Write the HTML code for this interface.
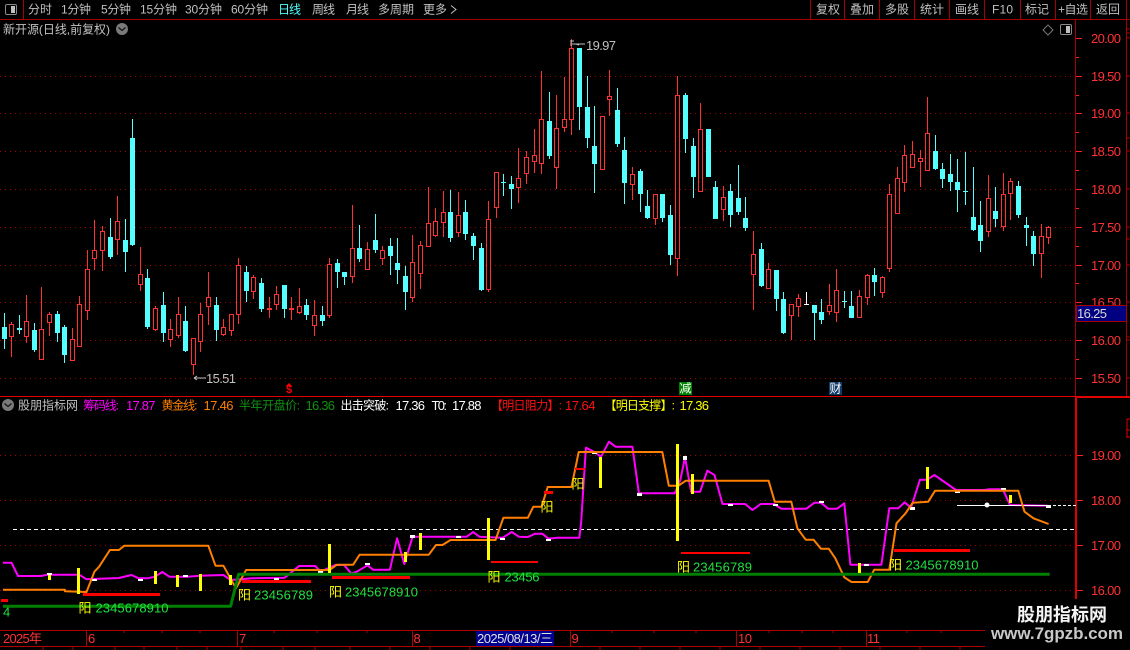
<!DOCTYPE html>
<html><head><meta charset="utf-8"><style>
html,body{margin:0;padding:0;background:#000;width:1130px;height:650px;overflow:hidden}
svg{display:block}
text{font-family:"Liberation Sans","WenQuanYi Zen Hei","Noto Sans CJK SC",sans-serif;font-size:12px;dominant-baseline:central}
.t{fill:#c0c0c0}
.n{font-size:13px}
.ax{fill:#ff3232;font-size:13px}
.g{fill:#20e040;font-size:13px}
.y{fill:#ffff00;font-size:13px}
</style></head><body>
<svg width="1130" height="650" viewBox="0 0 1130 650" xmlns="http://www.w3.org/2000/svg">
<rect width="1130" height="650" fill="#000"/>
<g shape-rendering="crispEdges">
<path d="M0 19.5H1130M23.5 0V19M810.5 0V19M844.5 0V19M879.5 0V19M914.5 0V19M949.5 0V19M984.5 0V19M1020.5 0V19M1055.5 0V19M1090.5 0V19M1126.5 0V19" stroke="#a80000" fill="none"/>
<path d="M0 76.5H1076M0 113.5H1076M0 151.5H1076M0 189.5H1076M0 227.5H1076M0 265.5H1076M0 302.5H1076M0 340.5H1076M0 378.5H1076M0 455.5H1076M0 500.5H1076M0 545.5H1076M0 590.5H1076" stroke="#a00000" stroke-dasharray="1 4" fill="none"/>
<path d="M1075.5 20V396M1126.5 20V396" stroke="#a80000" fill="none"/>
<path d="M1076 38.5h6M1076 76.5h6M1076 113.5h6M1076 151.5h6M1076 189.5h6M1076 227.5h6M1076 265.5h6M1076 302.5h6M1076 340.5h6M1076 378.5h6M1076 57.5h3M1076 95.5h3M1076 132.5h3M1076 170.5h3M1076 208.5h3M1076 246.5h3M1076 283.5h3M1076 321.5h3M1076 359.5h3" stroke="#ff2020" fill="none"/>
<path d="M1127 29h3M1127 33h3M1127 38h3M1127 76h3M1127 113h3M1127 138h3M1127 151h3M1127 189h3M1127 227h3M1127 239h3M1127 265h3M1127 302h3M1127 337h3M1127 340h3M1127 378h3" stroke="#a80000" fill="none"/>
<!-- teal wicks -->
<path fill="none" stroke="#54ffff" d="M4.5 313V349M19.5 315V334M34.5 323V352M57.5 311V342M64.5 325V363M110.5 218V259M125.5 219V272M132.5 119V246M147.5 269V329M163.5 292V342M185.5 306V352M216.5 297V341M246.5 266V302M261.5 278V312M284.5 285V318M306.5 299V320M322.5 306V326M337.5 259V288M344.5 272V285M359.5 225V262M375.5 214V253M390.5 238V275M397.5 238V284M405.5 266V310M450.5 190V242M465.5 200V240M473.5 233V260M481.5 243V291M503.5 174V196M511.5 176V209M549.5 92V159M579.5 48V130M587.5 76V148M594.5 106V193M617.5 88V147M624.5 137V204M640.5 169V212M647.5 190V219M662.5 194V222M670.5 205V265M685.5 93V153M693.5 138V198M708.5 129V177M715.5 181V219M730.5 184V227M738.5 165V215M745.5 197V231M761.5 243V287M776.5 270V311M783.5 292V334M814.5 305V340M821.5 299V324M844.5 291V308M851.5 291V318M874.5 268V296M935.5 135V170M942.5 163V188M950.5 154V191M957.5 159V212M965.5 152V205M973.5 167V231M980.5 201V252M995.5 187V227M1018.5 181V218M1026.5 217V246M1033.5 231V266"/>
<!-- teal bodies -->
<path fill="#54ffff" d="M2 327h5v12h-5zM17 328h5v2h-5zM32 330h5v20h-5zM55 314h5v19h-5zM62 327h5v28h-5zM108 237h5v20h-5zM123 240h5v12h-5zM130 138h5v107h-5zM145 278h5v49h-5zM161 305h5v28h-5zM183 321h5v30h-5zM214 305h5v25h-5zM244 272h5v19h-5zM259 283h5v26h-5zM282 285h5v24h-5zM304 305h5v10h-5zM320 315h5v6h-5zM335 263h5v9h-5zM342 272h5v5h-5zM357 248h5v11h-5zM373 240h5v10h-5zM388 246h5v10h-5zM395 263h5v7h-5zM403 276h5v16h-5zM448 212h5v26h-5zM463 212h5v22h-5zM471 236h5v10h-5zM479 248h5v42h-5zM501 182h5v1h-5zM509 184h5v5h-5zM547 121h5v35h-5zM577 48h5v59h-5zM585 107h5v31h-5zM592 146h5v18h-5zM615 110h5v34h-5zM622 150h5v33h-5zM638 171h5v23h-5zM645 206h5v12h-5zM660 194h5v24h-5zM668 215h5v40h-5zM683 95h5v44h-5zM691 146h5v31h-5zM706 129h5v48h-5zM713 187h5v32h-5zM728 191h5v24h-5zM736 198h5v14h-5zM743 218h5v10h-5zM759 249h5v37h-5zM774 270h5v29h-5zM781 299h5v34h-5zM812 305h5v8h-5zM819 312h5v8h-5zM842 301h5v1h-5zM849 306h5v12h-5zM872 275h5v7h-5zM933 151h5v18h-5zM940 169h5v10h-5zM948 174h5v8h-5zM955 182h5v8h-5zM963 191h5v1h-5zM971 217h5v13h-5zM978 225h5v16h-5zM993 211h5v8h-5zM1016 186h5v29h-5zM1024 225h5v3h-5zM1031 236h5v18h-5z"/>
<!-- red wicks -->
<path fill="none" stroke="#ff3232" d="M11.5 322V357M26.5 295V343M41.5 287V359M49.5 312V336M72.5 328V360M79.5 296V346M87.5 250V320M94.5 220V270M102.5 226V271M117.5 196V255M140.5 247V291M155.5 306V331M170.5 319V347M178.5 297V338M193.5 338V375M200.5 303V352M208.5 272V325M223.5 319V336M231.5 314V336M238.5 258V324M253.5 275V299M269.5 297V318M276.5 286V310M291.5 297V320M299.5 288V314M314.5 300V336M329.5 258V318M352.5 205V283M367.5 242V270M382.5 246V265M412.5 235V302M420.5 241V289M428.5 187V246M435.5 208V237M443.5 191V237M458.5 192V237M488.5 201V292M496.5 172V218M518.5 148V203M526.5 151V184M534.5 129V173M541.5 71V174M556.5 95V189M564.5 77V132M571.5 39V135M609.5 70V116M632.5 167V200M655.5 194V225M677.5 76V276M700.5 103V192M723.5 186V221M753.5 231V310M768.5 263V288M791.5 304V340M798.5 294V317M829.5 284V315M836.5 269V322M859.5 290V317M867.5 274V305M882.5 276V298M889.5 184V272M897.5 167V213M904.5 145V192M912.5 141V167M920.5 150V187M927.5 97V170M988.5 175V237M1003.5 173V231M1010.5 178V220M1041.5 224V278M1048.5 226V244"/>
<!-- red bodies -->
<path fill="#000" stroke="#ff3232" d="M9.5 324.5h4v12h-4zM24.5 321.5h4v15h-4zM39.5 329.5h4v30h-4zM47.5 314.5h4v8h-4zM70.5 339.5h4v21h-4zM77.5 304.5h4v42h-4zM85.5 269.5h4v41h-4zM92.5 250.5h4v8h-4zM100.5 231.5h4v19h-4zM115.5 221.5h4v18h-4zM138.5 274.5h4v10h-4zM153.5 308.5h4v21h-4zM168.5 329.5h4v10h-4zM176.5 314.5h4v21h-4zM191.5 338.5h4v26h-4zM198.5 314.5h4v27h-4zM206.5 297.5h4v9h-4zM221.5 327.5h4v7h-4zM229.5 314.5h4v16h-4zM236.5 265.5h4v49h-4zM251.5 277.5h4v14h-4zM267.5 308.5h4v1h-4zM274.5 294.5h4v10h-4zM289.5 308.5h4v1h-4zM297.5 306.5h4v6h-4zM312.5 315.5h4v10h-4zM327.5 264.5h4v51h-4zM350.5 248.5h4v28h-4zM365.5 249.5h4v20h-4zM380.5 250.5h4v8h-4zM410.5 262.5h4v35h-4zM418.5 245.5h4v28h-4zM426.5 223.5h4v23h-4zM433.5 221.5h4v14h-4zM441.5 212.5h4v10h-4zM456.5 215.5h4v17h-4zM486.5 219.5h4v70h-4zM494.5 172.5h4v35h-4zM516.5 178.5h4v9h-4zM524.5 157.5h4v16h-4zM532.5 155.5h4v6h-4zM539.5 119.5h4v44h-4zM554.5 128.5h4v39h-4zM562.5 119.5h4v8h-4zM569.5 48.5h4v71h-4zM600.5 116.5h4v53h-4zM607.5 96.5h4v3h-4zM630.5 174.5h4v10h-4zM653.5 194.5h4v24h-4zM675.5 95.5h4v163h-4zM698.5 129.5h4v62h-4zM721.5 197.5h4v12h-4zM751.5 254.5h4v20h-4zM766.5 269.5h4v19h-4zM789.5 304.5h4v11h-4zM796.5 298.5h4v8h-4zM827.5 305.5h4v6h-4zM834.5 290.5h4v22h-4zM857.5 296.5h4v21h-4zM865.5 275.5h4v22h-4zM880.5 277.5h4v15h-4zM887.5 194.5h4v74h-4zM895.5 178.5h4v35h-4zM902.5 155.5h4v27h-4zM910.5 154.5h4v13h-4zM918.5 158.5h4v3h-4zM925.5 133.5h4v37h-4zM986.5 198.5h4v33h-4zM1001.5 194.5h4v32h-4zM1008.5 181.5h4v12h-4zM1039.5 236.5h4v17h-4zM1046.5 227.5h4v10h-4z"/>
<!-- white doji -->
<path d="M806.5 292V305M804 304.5h5" stroke="#fff" fill="none"/>
<!-- price box -->
<rect x="1076.5" y="305.5" width="50" height="16" fill="#000080" stroke="#a80000"/>
<!-- main panel separator -->
<rect x="0" y="396" width="1130" height="1" fill="#e00000"/>
<!-- markers -->
<rect x="679" y="382" width="13" height="13" fill="#008000"/>
<rect x="829" y="382" width="13" height="13" fill="#103a6a"/>
<!-- lower axis -->
<rect x="1075" y="397" width="2" height="202" fill="#e00000"/>
<rect x="1077" y="397" width="53" height="1" fill="#e00000"/>
<path d="M1077 455.5h6M1077 500.5h6M1077 545.5h6M1077 590.5h6" stroke="#ff2020" fill="none"/>
<path d="M1127 419V438M1127 419h3M1127 430h3M1127 437h3" stroke="#e00000" fill="none"/>
<!-- white dashed -->
<path d="M13 529.5H1076" stroke="#fff" stroke-dasharray="4 3" fill="none"/>
<path d="M1048 505.5H1076" stroke="#fff" stroke-dasharray="3 2" fill="none"/>
<!-- date axis -->
<path d="M0 630.5H1130M0 646.5H1130M86.5 630V646M237.5 630V646M412.5 630V646M570.5 630V646M736.5 630V646M866.5 630V646" stroke="#b00000" fill="none"/>
<path d="M124 630v3M162 630v3M200 630v3M274 630v3M317 630v3M367 630v3M612 630v3M654 630v3M696 630v3M769 630v3M802 630v3M833 630v3M907 630v3M941 630v3M43 646v4M73 646v4M115 646v4M144 646v4M177 646v4M207 646v4M241 646v4M283 646v4M315 646v4M350 646v4M390 646v4M430 646v4M470 646v4M510 646v4M600 646v4M640 646v4M680 646v4M720 646v4M760 646v4M800 646v4M840 646v4M880 646v4M920 646v4M960 646v4" stroke="#b00000" fill="none"/>
<rect x="476" y="631" width="78" height="15" fill="#000090"/>
</g>

<!-- indicator lines -->
<polyline fill="none" stroke="#ff00ff" stroke-width="2" stroke-linejoin="round" points="2.9,562.7 11.5,562.7 18,576 41.4,576 46.8,574.7 79.3,574.7 86.5,579.3 118.9,578 131.5,575 138.7,578.3 147.7,578.3 155,576.7 162.2,572 169.4,576.7 187.4,576.7 200,575.7 223.4,575 230.6,580 252.3,578.3 284.7,577.7 299.1,566 315.3,566 320.7,571.7 335.1,565 344.1,565 351.4,573.7 356.8,571.7 367.6,565.3 373,569.7 389.9,569.7 397.1,538.3 404.3,564 412.6,536.7 466.7,536.7 473.2,532 479.3,536.7 502.7,537.7 511.7,532 518.9,536.7 527.9,537 535.1,533.7 542.3,533.7 548.5,538.7 556.8,537.7 579.4,537.7 581.2,521.7 585.9,447.7 593.8,451.7 601,456.7 609,441.7 615.5,446.7 632.4,446.7 638.9,493.3 674.9,493.3 680.3,480 685,457.3 691.1,491.7 700.1,491.7 707.3,470.7 714.5,475 722.5,504 745.2,504 752.4,510 760.7,504 774,504 781.2,508.7 806.4,508.7 814.4,502.7 820.9,502.7 828.1,508.7 837.1,508.7 844.3,503.3 850.4,564.7 881.4,564.7 889.3,508.3 898.3,508.3 904.5,502.3 911,507.7 920,479.7 927.2,479.7 934.4,475 956,490 984.8,490 988.4,489.3 1002.8,489.3 1010,505 1047.9,505.7"/>
<g fill="#fff" shape-rendering="crispEdges">
<rect x="47" y="573" width="5" height="2"/><rect x="92" y="579" width="5" height="2"/><rect x="138" y="579" width="5" height="2"/><rect x="183" y="575" width="5" height="2"/><rect x="274" y="578" width="5" height="2"/><rect x="318" y="571" width="5" height="2"/><rect x="365" y="563" width="5" height="2"/><rect x="410" y="535" width="5" height="3"/><rect x="456" y="536" width="5" height="2"/><rect x="500" y="538" width="5" height="2"/><rect x="546" y="539" width="5" height="2"/>
<rect x="592" y="452" width="5" height="2"/><rect x="637" y="493" width="5" height="3"/><rect x="683" y="456" width="4" height="4"/><rect x="728" y="504" width="5" height="2"/><rect x="773" y="504" width="5" height="2"/><rect x="819" y="501" width="5" height="2"/><rect x="864" y="564" width="5" height="2"/><rect x="910" y="507" width="5" height="3"/><rect x="955" y="490" width="5" height="3"/><rect x="1001" y="488" width="5" height="2"/><rect x="1046" y="505" width="5" height="3"/>
<rect x="957" y="505" width="91" height="1"/>
</g>
<circle cx="987" cy="505" r="2.5" fill="#fff"/>
<polyline fill="none" stroke="#ff8000" stroke-width="2" stroke-linejoin="round" points="2.9,589.7 64.9,589.7 64.9,591.3 86.5,592 94.4,571.7 99.1,566.7 109.9,550 118.9,550 124.3,545.7 208.3,545.7 215.5,565.7 223.4,565.7 236,588.3 246.1,570 329.7,570 337,564.7 353.2,564.7 359.6,554.7 428.8,554.7 436,545 442.5,545 450.5,540 495.5,540 503.4,517.7 527.9,517.7 533.3,506.7 541.6,506.7 547.7,487 571.5,487 578.7,452 662.3,452 668.8,485.7 678.5,485.7 685.7,480.7 768.6,480.7 774.7,501.7 791.3,501.7 797.4,528.3 805.7,539.7 813.6,539.7 820.9,548.7 828.8,548.7 835.3,558.3 844.3,577.3 851.5,582 867.7,582 874.2,569.7 889.3,569.7 896.5,523.3 905.5,513.3 912.7,502.7 928.2,501.7 935.1,490.7 1018.3,490.7 1024.5,511.7 1033.5,518.3 1048.6,524"/>
<polyline fill="none" stroke="#008000" stroke-width="3" stroke-linejoin="round" points="2.9,606.3 230.6,606.3 238.6,574.3 1049.7,574.3"/>
<g fill="#ffff00" shape-rendering="crispEdges">
<rect x="77" y="568" width="3" height="26"/><rect x="48" y="575" width="3" height="5"/><rect x="154" y="571" width="3" height="13"/><rect x="176" y="575" width="3" height="12"/><rect x="199" y="574" width="3" height="17"/><rect x="229" y="575" width="3" height="10"/><rect x="328" y="544" width="3" height="29"/><rect x="404" y="552" width="3" height="10"/><rect x="419" y="533" width="3" height="17"/><rect x="487" y="518" width="3" height="42"/>
<rect x="599" y="457" width="3" height="31"/><rect x="676" y="444" width="3" height="97"/><rect x="691" y="474" width="3" height="20"/><rect x="858" y="563" width="3" height="10"/><rect x="926" y="467" width="3" height="22"/><rect x="1009" y="495" width="3" height="8"/>
</g>
<g fill="#ff0000" shape-rendering="crispEdges">
<rect x="83" y="593" width="77" height="3"/><rect x="1" y="599" width="7" height="3"/><rect x="242" y="580" width="69" height="3"/><rect x="332" y="576" width="78" height="3"/><rect x="491" y="561" width="47" height="2"/><rect x="544" y="491" width="9" height="3"/><rect x="681" y="552" width="69" height="2"/><rect x="894" y="549" width="76" height="3"/><rect x="575" y="468" width="10" height="2"/>
</g>

<!-- top bar icon -->
<rect x="5.5" y="4.5" width="11" height="10" rx="1.5" fill="#000" stroke="#8a8a8a"/><rect x="11" y="6" width="4" height="7" fill="#c0c0c0"/>
<!-- top bar text -->
<text class="t" x="28" y="9.5" textLength="24">分时</text>
<text class="t" x="61" y="9.5" textLength="30">1分钟</text>
<text class="t" x="101" y="9.5" textLength="30">5分钟</text>
<text class="t" x="140" y="9.5" textLength="37">15分钟</text>
<text class="t" x="185" y="9.5" textLength="37">30分钟</text>
<text class="t" x="231" y="9.5" textLength="37">60分钟</text>
<text x="278" y="9.5" textLength="23" fill="#54ffff">日线</text>
<text class="t" x="312" y="9.5" textLength="23">周线</text>
<text class="t" x="346" y="9.5" textLength="23">月线</text>
<text class="t" x="378" y="9.5" textLength="36">多周期</text>
<text class="t" x="423" y="9.5" textLength="24">更多</text>
<path d="M451 5.5l5 4-5 4" fill="none" stroke="#c0c0c0"/>
<text class="t" x="816" y="9.5" textLength="24">复权</text>
<text class="t" x="850" y="9.5" textLength="24">叠加</text>
<text class="t" x="885" y="9.5" textLength="24">多股</text>
<text class="t" x="920" y="9.5" textLength="24">统计</text>
<text class="t" x="955" y="9.5" textLength="24">画线</text>
<text class="t" x="992" y="9.5" textLength="21">F10</text>
<text class="t" x="1025" y="9.5" textLength="24">标记</text>
<text class="t" x="1058" y="9.5" textLength="30">+自选</text>
<text class="t" x="1096" y="9.5" textLength="24">返回</text>
<!-- title -->
<text class="t" x="3" y="29.5" textLength="107">新开源(日线,前复权)</text>
<circle cx="122" cy="29" r="6" fill="#7a7a7a"/><path d="M118.5 27.5l3.5 3 3.5-3" fill="none" stroke="#111" stroke-width="1.2"/>
<path d="M1048 25l5 5-5 5-5-5z" fill="none" stroke="#777"/>
<rect x="1060.5" y="24.5" width="11" height="10" rx="1.5" fill="#000" stroke="#8a8a8a"/><rect x="1066" y="26" width="4" height="7" fill="#c0c0c0"/>
<!-- hi/lo labels -->
<path d="M571 40v6M571 41h3M572 44h13M576 44l3 1" stroke="#c0c0c0" fill="none"/>
<text class="t n" x="586" y="45.5" textLength="30">19.97</text>
<path d="M194 378h12M194 378l3-2M194 378l3 2" stroke="#c0c0c0" fill="none"/>
<text class="t n" x="206" y="378.5" textLength="30">15.51</text>
<!-- axis labels -->
<text class="ax" x="1091" y="38.5" textLength="30">20.00</text>
<text class="ax" x="1091" y="76.5" textLength="30">19.50</text>
<text class="ax" x="1091" y="113.5" textLength="30">19.00</text>
<text class="ax" x="1091" y="151.5" textLength="30">18.50</text>
<text class="ax" x="1091" y="189.5" textLength="30">18.00</text>
<text class="ax" x="1091" y="227.5" textLength="30">17.50</text>
<text class="ax" x="1091" y="265.5" textLength="30">17.00</text>
<text class="ax" x="1091" y="340.5" textLength="30">16.00</text>
<text class="ax" x="1091" y="378.5" textLength="30">15.50</text>
<text x="1077" y="313.5" textLength="30" fill="#d8d8d8" style="font-size:13px">16.25</text>
<clipPath id="c"><rect x="1077" y="290" width="49" height="15"/></clipPath>
<text class="ax" x="1091" y="302.5" textLength="30" clip-path="url(#c)">16.50</text>
<text class="ax" x="1091" y="455.5" textLength="30">19.00</text>
<text class="ax" x="1091" y="500.5" textLength="30">18.00</text>
<text class="ax" x="1091" y="545.5" textLength="30">17.00</text>
<text class="ax" x="1091" y="590.5" textLength="30">16.00</text>
<!-- markers text -->
<text x="289" y="390" text-anchor="middle" fill="#ff0000" style="font-size:11px;font-weight:bold">$</text>
<path d="M286 386l3-3 3 3z" fill="#ff0000"/>
<text x="685.5" y="388.5" text-anchor="middle" fill="#fff">减</text>
<text x="835.5" y="388.5" text-anchor="middle" fill="#fff">财</text>
<!-- indicator header -->
<circle cx="8" cy="405" r="6" fill="#7a7a7a"/><path d="M4.5 403.5l3.5 3 3.5-3" fill="none" stroke="#111" stroke-width="1.2"/>
<text class="t" x="18" y="405.5" textLength="60">股朋指标网</text>
<text x="83" y="405.5" textLength="36" fill="#ff00ff">筹码线:</text>
<text class="n" x="126" y="405.5" textLength="29.5" fill="#ff00ff">17.87</text>
<text x="161.5" y="405.5" textLength="36" fill="#ff8000">黄金线:</text>
<text class="n" x="203.5" y="405.5" textLength="30" fill="#ff8000">17.46</text>
<text x="239" y="405.5" textLength="61" fill="#109010">半年开盘价:</text>
<text class="n" x="305.5" y="405.5" textLength="29.5" fill="#109010">16.36</text>
<text x="340.5" y="405.5" textLength="48.5" fill="#fff">出击突破:</text>
<text class="n" x="395.5" y="405.5" textLength="29.5" fill="#fff">17.36</text>
<text class="n" x="431.5" y="405.5" textLength="15.5" fill="#fff">T0:</text>
<text class="n" x="452" y="405.5" textLength="29.5" fill="#fff">17.88</text>
<text x="491" y="405.5" textLength="71" fill="#ff1010">【明日阻力】:</text>
<text class="n" x="565" y="405.5" textLength="30.5" fill="#ff1010">17.64</text>
<text x="604.5" y="405.5" textLength="70.5" fill="#ffff00">【明日支撑】:</text>
<text class="n" x="679.5" y="405.5" textLength="29.5" fill="#ffff00">17.36</text>
<!-- resist labels -->
<text class="y" x="78.5" y="608">阳</text><text class="g" x="95.5" y="608" textLength="73">2345678910</text>
<text class="y" x="238" y="595">阳</text><text class="g" x="254" y="595" textLength="59">23456789</text>
<text class="y" x="329" y="592">阳</text><text class="g" x="345" y="592" textLength="73">2345678910</text>
<text class="y" x="487.5" y="577">阳</text><text class="g" x="504.5" y="577" textLength="35">23456</text>
<text class="y" x="540.5" y="507">阳</text>
<text class="y" x="571.5" y="484">阳</text>
<text class="y" x="677" y="567">阳</text><text class="g" x="693" y="567" textLength="59">23456789</text>
<text class="y" x="889" y="565">阳</text><text class="g" x="905.5" y="565" textLength="73">2345678910</text>
<text class="g" x="3" y="612">4</text>
<!-- date labels -->
<text class="n" x="3" y="638.5" textLength="39" fill="#ff3232">2025年</text>
<text class="n" x="88" y="638.5" fill="#ff3232">6</text>
<text class="n" x="239" y="638.5" fill="#ff3232">7</text>
<text class="n" x="413.5" y="638.5" fill="#ff3232">8</text>
<text class="n" x="571.5" y="638.5" fill="#ff3232">9</text>
<text class="n" x="738" y="638.5" textLength="14" fill="#ff3232">10</text>
<text class="n" x="867" y="638.5" textLength="13" fill="#ff3232">11</text>
<text class="n" x="477" y="638.5" textLength="76" fill="#e0e0e0">2025/08/13/三</text>
<!-- watermark -->
<rect x="985" y="600" width="145" height="50" fill="#000"/>
<text x="1017" y="615" textLength="90" fill="#f4f4f4" style="font-size:18px;font-weight:bold">股朋指标网</text>
<text x="991" y="633.5" textLength="132" fill="#c8c8c8" style="font-size:17px;font-weight:bold">www.7gpzb.com</text>
</svg>
</body></html>
